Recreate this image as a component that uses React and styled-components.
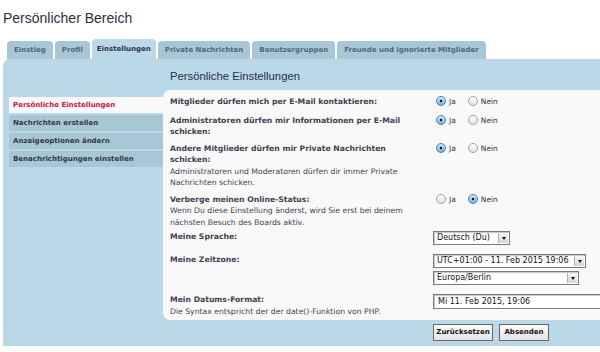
import React from "react";
import styled, { createGlobalStyle } from "styled-components";

const GlobalStyle = createGlobalStyle`
  body {
    margin: 0;
    background: #fff;
    overflow: hidden;
    font-family: "DejaVu Sans", Verdana, sans-serif;
    color: #333;
  }
`;

const Page = styled.div`
  width: 660px;
  padding: 8px 0 0 3px;
`;

const Title = styled.h2`
  margin: 0;
  font-family: "Liberation Sans", Arial, sans-serif;
  font-weight: normal;
  font-size: 14px;
  line-height: 20px;
  color: #28313f;
`;

const TabBar = styled.ul`
  display: flex;
  align-items: flex-end;
  gap: 2px;
  margin: 11px 0 0;
  padding: 0 0 0 4px;
  list-style: none;
`;

const Tab = styled.li`
  height: ${(p) => (p.$active ? 20 : 18)}px;
  line-height: ${(p) => (p.$active ? 20 : 18)}px;
  padding: 0 ${(p) => (p.$active ? 5 : 7)}px;
  border-radius: 4px 4px 0 0;
  background: ${(p) => (p.$active ? "#bad8e8" : "#a8c6d4")};
  color: ${(p) => (p.$active ? "#2c3440" : "#536482")};
  font-size: 7px;
  font-weight: bold;
  white-space: nowrap;
`;

const Panel = styled.div`
  background: #bad8e8;
  border-radius: 7px 0 0 0;
  padding: 0 0 5px 6px;
`;

const PanelHeading = styled.h3`
  margin: 0 0 7px 161px;
  padding-top: 10px;
  font-family: "Liberation Sans", Arial, sans-serif;
  font-weight: normal;
  font-size: 11.3px;
  line-height: 14px;
  color: #28313f;
`;

const Body = styled.div`
  display: flex;
  align-items: flex-start;
`;

const Menu = styled.ul`
  width: 154px;
  flex: none;
  margin: 7px 0 0;
  padding: 0;
  list-style: none;
  display: flex;
  flex-direction: column;
  gap: 2px;
`;

const MenuItem = styled.li`
  height: 16px;
  line-height: 16px;
  padding-left: 4px;
  font-size: 7px;
  font-weight: bold;
  background: ${(p) => (p.$active ? "#f9f9f9" : "#a9c6d4")};
  color: ${(p) => (p.$active ? "#d31141" : "#2f3845")};
  white-space: nowrap;
`;

const Content = styled.div`
  flex: 1;
  background: #f9f9f9;
  border-radius: 7px 0 0 7px;
  padding: 3px 0 0.5px 7px;
`;

const Row = styled.div`
  display: flex;
  padding: ${(p) => p.$top ?? 2.5}px 0 ${(p) => p.$bottom ?? 2.5}px;
`;

const Dt = styled.div`
  width: 263px;
  flex: none;
  font-size: 7.7px;
  line-height: 11.5px;
  color: #3b4350;
`;

const Label = styled.div`
  font-weight: bold;
  white-space: nowrap;
`;

const Explain = styled.div`
  white-space: nowrap;
`;

const Dd = styled.div`
  flex: 1;
  display: flex;
  flex-direction: column;
  gap: 3px;
`;

const RadioGroup = styled.div`
  display: flex;
  align-items: center;
  height: 11.5px;
  padding-bottom: 2.5px;
`;

const RadioLabel = styled.label`
  display: inline-flex;
  align-items: center;
  gap: 3px;
  margin-left: 3px;
  margin-right: 9px;
  font-size: 7.5px;
  color: #333;
`;

const Radio = styled.span`
  width: 8px;
  height: 8px;
  border-radius: 50%;
  border: 1px solid ${(p) => (p.$checked ? "#4f7ea8" : "#a0a0a0")};
  background: ${(p) =>
    p.$checked
      ? "radial-gradient(circle at 50% 50%, #111 0 1.4px, transparent 1.6px), linear-gradient(#cfe8fb, #6fb4ec)"
      : "linear-gradient(#ffffff, #e2e2e2)"};
  box-sizing: content-box;
`;

const Select = styled.div`
  display: flex;
  align-items: stretch;
  width: ${(p) => p.$width}px;
  height: 14px;
  box-sizing: border-box;
  border: 1px solid #7a7a7a;
  box-shadow: inset 1px 1px 0 #c8c8c8;
  background: #fff;
  font-size: 8px;
  color: #111;
`;

const SelectText = styled.span`
  flex: 1;
  line-height: 12px;
  padding-left: 3px;
  white-space: nowrap;
  overflow: hidden;
`;

const SelectArrow = styled.span`
  width: 9px;
  margin: 1px 1px 1px 0;
  background: linear-gradient(#f6f6f6, #d6d6d6);
  border-left: 1px solid #b0b0b0;
  display: flex;
  align-items: center;
  justify-content: center;

  &::after {
    content: "";
    border-left: 2.5px solid transparent;
    border-right: 2.5px solid transparent;
    border-top: 3px solid #111;
  }
`;

const TextInput = styled.div`
  width: 200px;
  height: 15px;
  box-sizing: border-box;
  border: 1px solid #7a7a7a;
  box-shadow: inset 1px 1px 0 #c8c8c8;
  background: #fff;
  padding-left: 4px;
  font-size: 8px;
  line-height: 13px;
  color: #111;
  white-space: nowrap;
`;

const ButtonRow = styled.div`
  display: flex;
  gap: 6px;
  margin: 4px 0 0 424px;
`;

const Button = styled.button`
  height: 17px;
  width: ${(p) => p.$width}px;
  padding: 0;
  border: 1px solid #666;
  background: linear-gradient(#fafafa, #e4e4e4);
  font-family: "DejaVu Sans", Verdana, sans-serif;
  font-size: 7px;
  font-weight: bold;
  color: #111;
`;

const tabs = [
  "Einstieg",
  "Profil",
  "Einstellungen",
  "Private Nachrichten",
  "Benutzergruppen",
  "Freunde und ignorierte Mitglieder",
];

const menu = [
  "Persönliche Einstellungen",
  "Nachrichten erstellen",
  "Anzeigeoptionen ändern",
  "Benachrichtigungen einstellen",
];

const YesNo = ({ yes }) => (
  <RadioGroup>
    <RadioLabel>
      <Radio $checked={yes} />
      Ja
    </RadioLabel>
    <RadioLabel>
      <Radio $checked={!yes} />
      Nein
    </RadioLabel>
  </RadioGroup>
);

const Dropdown = ({ width, children }) => (
  <Select $width={width}>
    <SelectText>{children}</SelectText>
    <SelectArrow />
  </Select>
);

export default function App() {
  return (
    <>
      <GlobalStyle />
      <Page>
        <Title>Persönlicher Bereich</Title>
        <TabBar>
          {tabs.map((t) => (
            <Tab key={t} $active={t === "Einstellungen"}>
              {t}
            </Tab>
          ))}
        </TabBar>
        <Panel>
          <PanelHeading>Persönliche Einstellungen</PanelHeading>
          <Body>
            <Menu>
              {menu.map((m, i) => (
                <MenuItem key={m} $active={i === 0}>
                  {m}
                </MenuItem>
              ))}
            </Menu>
            <Content>
              <Row>
                <Dt>
                  <Label>Mitglieder dürfen mich per E-Mail kontaktieren:</Label>
                </Dt>
                <Dd>
                  <YesNo yes />
                </Dd>
              </Row>
              <Row>
                <Dt>
                  <Label>
                    Administratoren dürfen mir Informationen per E-Mail
                    <br />
                    schicken:
                  </Label>
                </Dt>
                <Dd>
                  <YesNo yes />
                </Dd>
              </Row>
              <Row>
                <Dt>
                  <Label>
                    Andere Mitglieder dürfen mir Private Nachrichten
                    <br />
                    schicken:
                  </Label>
                  <Explain>
                    Administratoren und Moderatoren dürfen dir immer Private
                    <br />
                    Nachrichten schicken.
                  </Explain>
                </Dt>
                <Dd>
                  <YesNo yes />
                </Dd>
              </Row>
              <Row>
                <Dt>
                  <Label>Verberge meinen Online-Status:</Label>
                  <Explain>
                    Wenn Du diese Einstellung änderst, wird Sie erst bei deinem
                    <br />
                    nächsten Besuch des Boards aktiv.
                  </Explain>
                </Dt>
                <Dd>
                  <YesNo yes={false} />
                </Dd>
              </Row>
              <Row $top={0.5} $bottom={4.5}>
                <Dt>
                  <Label>Meine Sprache:</Label>
                </Dt>
                <Dd>
                  <Dropdown width={77}>Deutsch (Du)</Dropdown>
                </Dd>
              </Row>
              <Row $top={4.5} $bottom={4.5}>
                <Dt>
                  <Label>Meine Zeitzone:</Label>
                </Dt>
                <Dd>
                  <Dropdown width={153}>UTC+01:00 - 11. Feb 2015 19:06</Dropdown>
                  <Dropdown width={146}>Europa/Berlin</Dropdown>
                </Dd>
              </Row>
              <Row $top={4.5} $bottom={2}>
                <Dt>
                  <Label>Mein Datums-Format:</Label>
                  <Explain>
                    Die Syntax entspricht der der date()-Funktion von PHP.
                  </Explain>
                </Dt>
                <Dd>
                  <TextInput>Mi 11. Feb 2015, 19:06</TextInput>
                </Dd>
              </Row>
            </Content>
          </Body>
          <ButtonRow>
            <Button $width={60}>Zurücksetzen</Button>
            <Button $width={50}>Absenden</Button>
          </ButtonRow>
        </Panel>
      </Page>
    </>
  );
}
